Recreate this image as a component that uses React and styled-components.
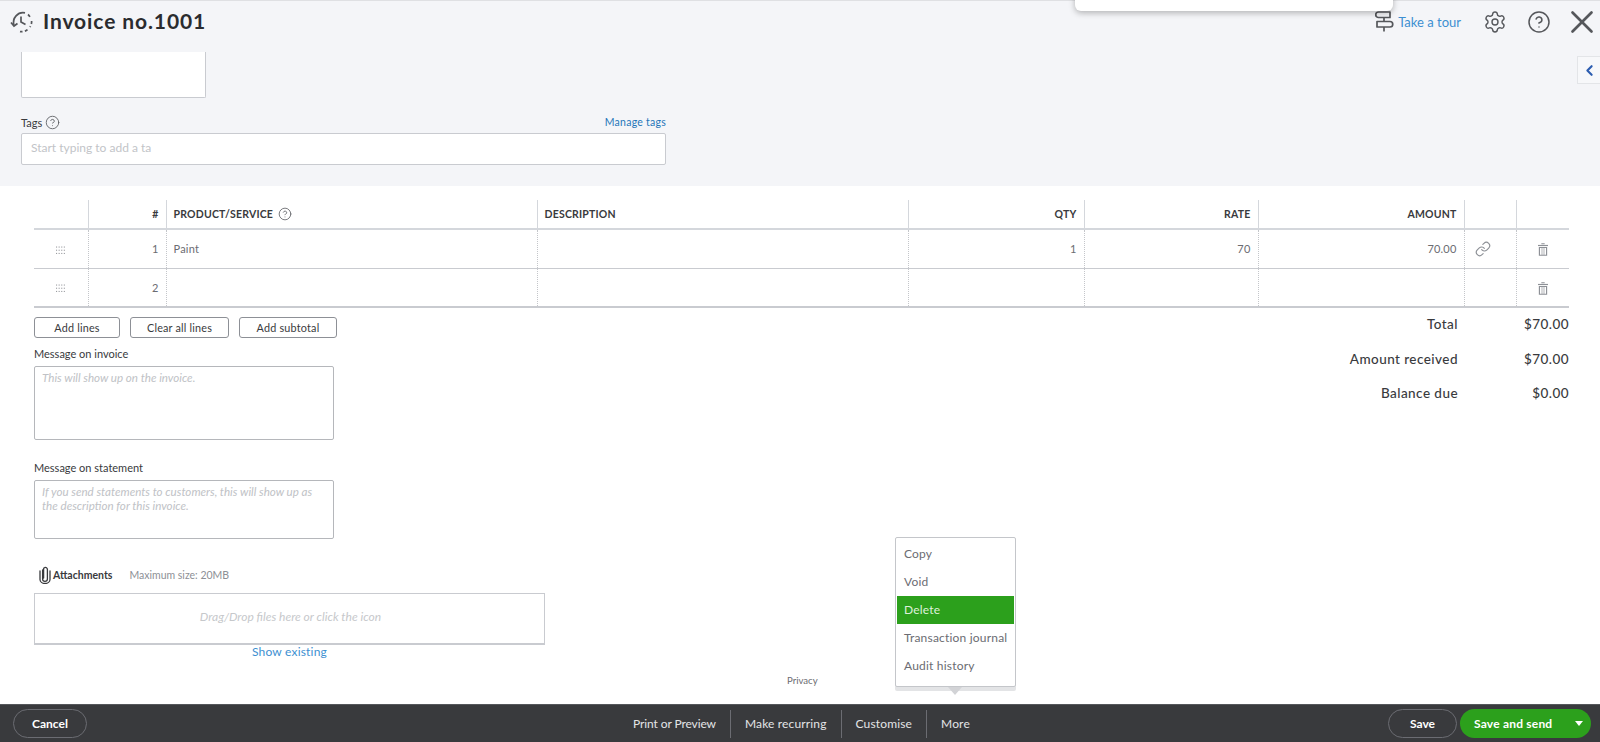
import React from 'react'
import styled, { createGlobalStyle } from 'styled-components'
import { Settings, CircleHelp, X, ChevronLeft, Link as LinkIcon } from 'lucide-react'

const GlobalStyle = createGlobalStyle`
    html, body {
        margin: 0;
        padding: 0;
        height: 100%;
        background: #fff;
        font-family: Lato, "Open Sans", sans-serif;
        color: #393a3d;
    }
`

const HistoryIcon = () => (
    <svg width="24" height="24" viewBox="0 0 24 24" fill="none" stroke="#55575b" strokeWidth="1.7">
        <path d="M4 15 A9.5 9.5 0 0 1 15 2.9" />
        <path d="M18 4.5 A9.5 9.5 0 0 1 20.5 8" strokeDasharray="3 2" />
        <path d="M21.6 11 A9.5 9.5 0 0 1 20 17" strokeDasharray="3 2.4" />
        <path d="M17.5 19.6 A9.5 9.5 0 0 1 10 21.6" strokeDasharray="3 2.4" />
        <path d="M1 12.5 L4 16 L7.5 13.5" />
        <path d="M11 6.5 V12 L15.5 14.5" />
    </svg>
)

const TourIcon = () => (
    <svg width="20" height="24" viewBox="0 0 20 24" fill="none" stroke="#55575b" strokeWidth="1.7" strokeLinejoin="round">
        <path d="M3.5 2 H15 V7.5 H3.5 A2.7 2.7 0 0 1 3.5 2 Z" />
        <path d="M2 11.5 H15 A2.7 2.7 0 0 1 15 17 H2 Z" />
        <path d="M9 7.5 V11.5 M9 17 V21.5" />
    </svg>
)

const TrashIcon = () => (
    <svg width="10" height="13" viewBox="0 0 12 15" fill="#8d9096">
        <rect x="4" y="0" width="4" height="1.2" />
        <rect x="0" y="2" width="12" height="1.4" />
        <path d="M1 4.4 H11 V15 H1 Z M2.4 5.6 V13.8 H4.4 V5.6 Z M5.2 5.6 V13.8 H6.8 V5.6 Z M7.6 5.6 V13.8 H9.6 V5.6 Z" fillRule="evenodd" />
    </svg>
)

const GripIcon = () => (
    <svg width="9" height="9" viewBox="0 0 9 9" fill="#9a9ca0">
        {[0.5, 3.7, 6.9].map(y => [0, 2.6, 5.2, 7.8].map(x => (
            <rect key={`${x}-${y}`} x={x} y={y} width="1.1" height="1.1" />
        )))}
    </svg>
)

const ClipIcon = () => (
    <svg width="12" height="18" viewBox="0 0 12 18" fill="none" stroke="#393a3d" strokeWidth="1.3" strokeLinecap="round">
        <path d="M3.6 4 V13 A2.4 2.4 0 0 0 8.4 13 V3.4 A2 2 0 0 0 5.6 1.6 A1.6 1.6 0 0 0 4.6 3.4 V12 M1 5 V13.5 A5 4 0 0 0 11 13.5 V5" />
    </svg>
)

const Hint = ({ size = 15 }) => <HintIcon size={size} strokeWidth={1.4} />

const lines = [
    { id: 1, product: 'Paint', qty: '1', rate: '70', amount: '70.00', linked: true },
    { id: 2, product: '', qty: '', rate: '', amount: '', linked: false }
]

const totals = [
    ['Total', '$70.00'],
    ['Amount received', '$70.00'],
    ['Balance due', '$0.00']
]

const menuItems = ['Copy', 'Void', 'Delete', 'Transaction journal', 'Audit history']

const App = () => (
    <Page>
        <GlobalStyle />
        <TopPopup />
        <Header>
            <TitleGroup>
                <HistoryIcon />
                <Title>Invoice no.1001</Title>
            </TitleGroup>
            <HeaderActions>
                <TourLink><TourIcon /><span>Take a tour</span></TourLink>
                <Settings size={24} strokeWidth={1.4} color="#55575b" />
                <CircleHelp size={24} strokeWidth={1.5} color="#55575b" />
                <CloseIcon size={38} strokeWidth={1.7} color="#55575b" />
            </HeaderActions>
        </Header>
        <GreyForm>
            <ClippedBox />
            <TagsHead>
                <FieldLabel>Tags <Hint /></FieldLabel>
                <SmallLink>Manage tags</SmallLink>
            </TagsHead>
            <TagsInput><Placeholder>Start typing to add a ta</Placeholder></TagsInput>
            <CollapseTab><ChevronLeft size={17} strokeWidth={3} color="#2c5db0" /></CollapseTab>
        </GreyForm>
        <Body>
            <LinesTable>
                <colgroup>
                    <col style={{ width: 54 }} />
                    <col style={{ width: 78 }} />
                    <col style={{ width: 371 }} />
                    <col style={{ width: 371 }} />
                    <col style={{ width: 176 }} />
                    <col style={{ width: 174 }} />
                    <col style={{ width: 206 }} />
                    <col style={{ width: 52 }} />
                    <col style={{ width: 53 }} />
                </colgroup>
                <thead>
                    <tr>
                        <HeadCell />
                        <HeadCell $right>#</HeadCell>
                        <HeadCell>PRODUCT/SERVICE <Hint size={14} /></HeadCell>
                        <HeadCell>DESCRIPTION</HeadCell>
                        <HeadCell $right>QTY</HeadCell>
                        <HeadCell $right>RATE</HeadCell>
                        <HeadCell $right>AMOUNT</HeadCell>
                        <HeadCell />
                        <HeadCell />
                    </tr>
                </thead>
                <tbody>
                    {lines.map(line => (
                        <tr key={line.id}>
                            <RowCell $center><GripIcon /></RowCell>
                            <RowCell $right>{line.id}</RowCell>
                            <RowCell>{line.product}</RowCell>
                            <RowCell />
                            <RowCell $right>{line.qty}</RowCell>
                            <RowCell $right>{line.rate}</RowCell>
                            <RowCell $right>{line.amount}</RowCell>
                            <RowCell $center>
                                {line.linked && <ChainIcon size={16} strokeWidth={1.7} color="#8d9096" />}
                            </RowCell>
                            <RowCell $center><TrashIcon /></RowCell>
                        </tr>
                    ))}
                </tbody>
            </LinesTable>
            <Lower>
                <LeftColumn>
                    <ButtonRow>
                        <LineButton $width={86}>Add lines</LineButton>
                        <LineButton $width={99}>Clear all lines</LineButton>
                        <LineButton $width={98}>Add subtotal</LineButton>
                    </ButtonRow>
                    <MessageLabel>Message on invoice</MessageLabel>
                    <MessageBox $height={74}>This will show up on the invoice.</MessageBox>
                    <MessageLabel $gap={20}>Message on statement</MessageLabel>
                    <MessageBox $height={59}>If you send statements to customers, this will show up as the description for this invoice.</MessageBox>
                    <AttachHead>
                        <ClipIcon />
                        <AttachTitle>Attachments</AttachTitle>
                        <AttachNote>Maximum size: 20MB</AttachNote>
                    </AttachHead>
                    <DropZone>Drag/Drop files here or click the icon</DropZone>
                    <ShowExisting>Show existing</ShowExisting>
                </LeftColumn>
                <Totals>
                    {totals.map(([label, value]) => (
                        <TotalRow key={label}>
                            <span>{label}</span>
                            <TotalValue>{value}</TotalValue>
                        </TotalRow>
                    ))}
                </Totals>
            </Lower>
            <Privacy>Privacy</Privacy>
            <MoreMenu>
                {menuItems.map(item => (
                    <MenuItem key={item} $active={item === 'Delete'}>{item}</MenuItem>
                ))}
                <MenuArrow />
            </MoreMenu>
        </Body>
        <Footer>
            <PillButton $width={74}>Cancel</PillButton>
            <FooterLinks>
                <FooterLink $tight>Print or Preview</FooterLink>
                <FooterLink>Make recurring</FooterLink>
                <FooterLink>Customise</FooterLink>
                <FooterLink>More</FooterLink>
            </FooterLinks>
            <FooterRight>
                <PillButton $width={69}>Save</PillButton>
                <SendButton>
                    <span>Save and send</span>
                    <Caret />
                </SendButton>
            </FooterRight>
        </Footer>
    </Page>
)

const Page = styled.div`
    position: relative;
    height: 742px;
    width: 1600px;
    overflow: hidden;
    display: flex;
    flex-direction: column;
`

const TopPopup = styled.div`
    position: absolute;
    top: -10px;
    left: 1075px;
    width: 318px;
    height: 21px;
    background: #fff;
    border-radius: 6px;
    box-shadow: 0 2px 6px rgba(0, 0, 0, 0.28);
    z-index: 2;
`

const Header = styled.header`
    height: 52px;
    flex: none;
    box-sizing: border-box;
    background: #f4f5f8;
    border-top: 1px solid #dfe0e3;
    display: flex;
    align-items: center;
    justify-content: space-between;
    padding: 0 0 9px 10px;
`

const TitleGroup = styled.div`
    display: flex;
    align-items: center;
    gap: 9px;
`

const Title = styled.h1`
    margin: -3px 0 0;
    font-size: 21px;
    font-weight: 700;
    letter-spacing: 0.9px;
    color: #2b2c2f;
`

const HeaderActions = styled.div`
    display: flex;
    align-items: center;
    gap: 20px;
`

const CloseIcon = styled(X)`
    margin: -7px -1px -7px -8px;
`

const TourLink = styled.div`
    display: flex;
    align-items: center;
    gap: 3px;
    margin-right: 2px;
    font-size: 13px;
    color: #3d8fd1;
`

const GreyForm = styled.section`
    position: relative;
    flex: none;
    height: 134px;
    box-sizing: border-box;
    background: #f4f5f8;
    padding-left: 21px;
`

const ClippedBox = styled.div`
    width: 185px;
    height: 46px;
    box-sizing: border-box;
    background: #fff;
    border: 1px solid #c9cbd0;
    border-top: 0;
    border-radius: 0 0 2px 2px;
`

const TagsHead = styled.div`
    width: 645px;
    margin-top: 14px;
    height: 20px;
    display: flex;
    align-items: center;
    justify-content: space-between;
`

const FieldLabel = styled.span`
    display: inline-flex;
    align-items: center;
    gap: 3px;
    font-size: 11px;
    color: #393a3d;
`

const HintIcon = styled(CircleHelp)`
    color: #5d5f63;
    flex: none;
`

const SmallLink = styled.span`
    font-size: 10.5px;
    letter-spacing: 0.25px;
    color: #1f75b8;
`

const TagsInput = styled.div`
    width: 645px;
    height: 32px;
    margin-top: 1px;
    box-sizing: border-box;
    background: #fff;
    border: 1px solid #c9cbd0;
    border-radius: 2px;
    padding: 0 9px 4px;
    display: flex;
    align-items: center;
    font-size: 12px;
    color: #c2c4c8;
`

const Placeholder = styled.span`
    width: 124px;
    overflow: hidden;
    white-space: nowrap;
`

const CollapseTab = styled.div`
    position: absolute;
    top: 4px;
    right: 0;
    width: 23px;
    height: 28px;
    box-sizing: border-box;
    background: #f7f8fa;
    border: 1px solid #e3e5e8;
    border-right: 0;
    display: flex;
    align-items: center;
    justify-content: center;
`

const Body = styled.main`
    position: relative;
    flex: 1;
    min-height: 0;
    padding: 14px 31px 0 34px;
`

const LinesTable = styled.table`
    width: 1535px;
    table-layout: fixed;
    border-collapse: collapse;
`

const HeadCell = styled.th`
    height: 29px;
    padding: 0 7px;
    box-sizing: border-box;
    font-size: 10.5px;
    font-weight: 700;
    letter-spacing: 0.2px;
    color: #393a3d;
    text-align: ${props => props.$right ? 'right' : 'left'};
    border-bottom: 2px solid #d4d7dc;
    border-left: 1px solid #d4d7dc;
    white-space: nowrap;
    &:first-child { border-left: 0; }
    svg { vertical-align: -3px; margin-left: 2px; }
`

const RowCell = styled.td`
    height: 39px;
    padding: 0 7px;
    box-sizing: border-box;
    font-size: 11px;
    letter-spacing: 0.2px;
    color: #6b6c72;
    text-align: ${props => props.$right ? 'right' : props.$center ? 'center' : 'left'};
    border-bottom: 1px solid #c9cbd0;
    border-left: 1px dotted #c4c6ca;
    &:first-child { border-left: 0; }
    tr:last-child > & { border-bottom: 2px solid #c9cbd0; }
    svg { vertical-align: middle; }
`

const ChainIcon = styled(LinkIcon)`
    margin-right: 15px;
`

const Lower = styled.div`
    display: flex;
    justify-content: space-between;
`

const LeftColumn = styled.div`
    display: flex;
    flex-direction: column;
    align-items: flex-start;
`

const ButtonRow = styled.div`
    display: flex;
    gap: 10px;
    margin-top: 9px;
`

const LineButton = styled.button`
    width: ${props => props.$width}px;
    height: 21px;
    padding: 0;
    background: #fff;
    border: 1px solid #8d9096;
    border-radius: 3px;
    font-family: inherit;
    font-size: 10.8px;
    letter-spacing: 0.2px;
    color: #393a3d;
`

const MessageLabel = styled.div`
    margin-top: ${props => props.$gap || 8}px;
    height: 20px;
    font-size: 11px;
    line-height: 15px;
    color: #393a3d;
`

const MessageBox = styled.div`
    width: 300px;
    height: ${props => props.$height}px;
    box-sizing: border-box;
    border: 1px solid #b5b7bb;
    border-radius: 2px;
    padding: 4px 7px;
    font-size: 11.6px;
    line-height: 14px;
    font-style: italic;
    color: #c0c2c6;
`

const AttachHead = styled.div`
    display: flex;
    align-items: center;
    margin: 27px 0 0 5px;
    height: 18px;
`

const AttachTitle = styled.span`
    margin-left: 2px;
    font-size: 10.5px;
    font-weight: 700;
    color: #393a3d;
`

const AttachNote = styled.span`
    margin-left: 17px;
    font-size: 10.5px;
    color: #8d9096;
`

const DropZone = styled.div`
    width: 511px;
    height: 52px;
    margin-top: 9px;
    box-sizing: border-box;
    border: 1px solid #c9cbd0;
    border-bottom-width: 2px;
    display: flex;
    align-items: center;
    justify-content: center;
    padding: 0 0 4px 2px;
    font-size: 12px;
    font-style: italic;
    color: #c6c8cb;
`

const ShowExisting = styled.div`
    width: 511px;
    line-height: 14px;
    text-align: center;
    font-size: 12px;
    letter-spacing: 0.2px;
    color: #3d8fd1;
`

const Totals = styled.div`
    display: flex;
    flex-direction: column;
    gap: 15px;
    padding-top: 7px;
`

const TotalRow = styled.div`
    display: flex;
    justify-content: flex-end;
    font-size: 13.5px;
    line-height: 19.5px;
    letter-spacing: 0.45px;
    font-weight: 500;
    color: #393a3d;
`

const TotalValue = styled.span`
    width: 111px;
    text-align: right;
`

const Privacy = styled.div`
    position: absolute;
    left: 787px;
    top: 489px;
    font-size: 9.6px;
    color: #6b6c72;
`

const MoreMenu = styled.div`
    position: absolute;
    left: 895px;
    top: 351px;
    width: 121px;
    height: 150px;
    box-sizing: border-box;
    padding: 2px 1px;
    background: #fff;
    border: 1px solid #c4c6ca;
    border-radius: 2px;
    box-shadow: 0 4px 0 #e3e4e6;
    z-index: 3;
`

const MenuItem = styled.div`
    height: 28px;
    box-sizing: border-box;
    padding: 0 0 2px 7px;
    display: flex;
    align-items: center;
    font-size: 12px;
    letter-spacing: 0.2px;
    white-space: nowrap;
    color: ${props => props.$active ? '#dff0da' : '#6b6c72'};
    background: ${props => props.$active ? '#2ca01c' : 'transparent'};
`

const MenuArrow = styled.span`
    position: absolute;
    left: 52px;
    bottom: -9px;
    width: 14px;
    height: 8px;
    background: #d2d3d6;
    clip-path: polygon(0 0, 100% 0, 50% 100%);
`

const Footer = styled.footer`
    flex: none;
    height: 38px;
    box-sizing: border-box;
    background: #393a3d;
    border-top: 1px solid #55575b;
    display: flex;
    align-items: center;
    justify-content: space-between;
    padding: 0 9px 0 13px;
    position: relative;
`

const FooterLinks = styled.nav`
    position: absolute;
    left: 619px;
    top: 5px;
    height: 28px;
    display: flex;
    align-items: center;
`

const FooterLink = styled.span`
    height: 100%;
    box-sizing: border-box;
    display: flex;
    align-items: center;
    padding: 0 14px 2px;
    font-size: 12px;
    letter-spacing: ${props => props.$tight ? '-0.1px' : '0.15px'};
    color: #e4e5e7;
    border-left: 1px solid #6b6c72;
    &:first-child { border-left: 0; }
`

const PillButton = styled.button`
    width: ${props => props.$width}px;
    height: 29px;
    padding: 0;
    background: transparent;
    border: 1px solid #6b6c72;
    border-radius: 15px;
    font-family: inherit;
    font-size: 12px;
    font-weight: 700;
    color: #fff;
`

const FooterRight = styled.div`
    display: flex;
    align-items: center;
    gap: 3px;
`

const SendButton = styled.button`
    width: 131px;
    height: 29px;
    padding: 0 8px 0 14px;
    background: #2ca01c;
    border: 0;
    border-radius: 15px;
    display: flex;
    align-items: center;
    justify-content: space-between;
    font-family: inherit;
    font-size: 12px;
    font-weight: 700;
    letter-spacing: 0.2px;
    color: #fff;
`

const Caret = styled.i`
    width: 0;
    height: 0;
    border-left: 4px solid transparent;
    border-right: 4px solid transparent;
    border-top: 5px solid #fff;
`

export default App
